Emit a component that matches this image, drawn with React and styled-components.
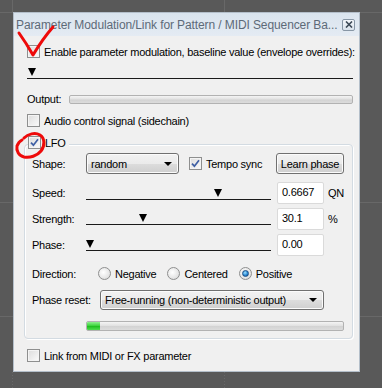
import React from 'react';
import styled, { createGlobalStyle } from 'styled-components';

const Global = createGlobalStyle`
  html, body { margin: 0; padding: 0; }
  body { background: #595959; font-family: "Liberation Sans", Arial, sans-serif; }
`;

const LINE = '#686868';

const Screen = styled.div`
  position: relative;
  width: 382px;
  height: 388px;
  overflow: hidden;
  box-sizing: border-box;
  padding: 12px 0 0 13px;
  background-color: #595959;
  background-image:
    linear-gradient(${LINE}, ${LINE}),
    linear-gradient(${LINE}, ${LINE}),
    linear-gradient(${LINE}, ${LINE}),
    linear-gradient(${LINE}, ${LINE}),
    linear-gradient(${LINE}, ${LINE}),
    repeating-linear-gradient(${LINE} 0 1px, transparent 1px 3px),
    repeating-linear-gradient(${LINE} 0 1px, transparent 1px 3px);
  background-size: 100% 1px, 100% 1px, 100% 1px, 1px 12px, 1px 12px, 1px 20px, 1px 20px;
  background-position: 0 12px, 0 202px, 0 316px, 12px 0, 224px 0, 12px 372px, 224px 372px;
  background-repeat: no-repeat;
`;

const Dialog = styled.div`
  width: 347px;
  height: 360px;
  box-sizing: border-box;
  border: 1px solid #b4bfca;
  background: #f0f0f0;
  display: flex;
  flex-direction: column;
  font-size: 11px;
  letter-spacing: -0.25px;
  color: #000;
`;

const TitleBar = styled.div`
  height: 23px;
  display: flex;
  align-items: center;
  padding: 0 4px 0 2px;
  background: linear-gradient(#dae4ee, #e4ebf3);
`;

const TitleText = styled.div`
  flex: 1;
  min-width: 0;
  font-family: "Liberation Sans", Arial, sans-serif;
  font-size: 12px;
  letter-spacing: -0.1px;
  color: #5d6a78;
  white-space: nowrap;
  overflow: hidden;
`;

const CloseBox = styled.div`
  flex: none;
  width: 13px;
  height: 12px;
  box-sizing: border-box;
  border: 1px solid #8796a5;
  border-radius: 2px;
  background: linear-gradient(#f4f7fa, #d9e2eb);
  display: flex;
  align-items: center;
  justify-content: center;
`;

const Body = styled.div`
  display: flex;
  flex-direction: column;
  padding: 0 4px 0 13px;
`;

const Row = styled.div`
  display: flex;
  align-items: center;
  margin-top: ${p => p.$mt || 0}px;
  height: ${p => (p.$h ? `${p.$h}px` : 'auto')};
  margin-left: ${p => p.$ml || 0}px;
`;

const BoxEl = styled.span`
  width: 13px;
  height: 13px;
  box-sizing: border-box;
  flex: none;
  border: 1px solid #8e8f8f;
  background: linear-gradient(135deg, #dcdcdc, #fbfbfb);
  box-shadow: inset 0 0 0 1px #f4f4f4;
  display: flex;
  align-items: center;
  justify-content: center;
`;

const CheckLabel = styled.span`
  margin-left: 4px;
  white-space: nowrap;
`;

const Checkbox = ({ checked, children }) => (
  <Row>
    <BoxEl>
      {checked && (
        <svg width="9" height="9" viewBox="0 0 9 9">
          <path d="M1 4.6 L3.4 7.2 L8 1.2" stroke="#3e5fa4" strokeWidth="1.7" fill="none" />
        </svg>
      )}
    </BoxEl>
    <CheckLabel>{children}</CheckLabel>
  </Row>
);

const SliderTrack = styled.div`
  position: relative;
  height: 10px;
  width: ${p => p.$w}px;
  margin-top: ${p => p.$mt || 0}px;
  align-self: flex-start;
  flex: none;
  border-bottom: 1px solid #1a1a1a;
  box-sizing: content-box;
`;

const Thumb = styled.div`
  position: absolute;
  top: 0;
  width: 0;
  height: 0;
  border-left: 4.5px solid transparent;
  border-right: 4.5px solid transparent;
  border-top: 8px solid #000;
`;

const Slider = ({ w, pos, mt }) => (
  <SliderTrack $w={w} $mt={mt}>
    <Thumb style={{ left: `${Math.round(pos * (w - 9))}px` }} />
  </SliderTrack>
);

const Label = styled.span`
  width: ${p => p.$w}px;
  flex: none;
  white-space: nowrap;
`;

const Meter = styled.div`
  position: relative;
  flex: none;
  width: ${p => p.$w}px;
  height: ${p => p.$h}px;
  box-sizing: border-box;
  border: 1px solid #b2b2b2;
  border-radius: 2px;
  background: linear-gradient(#f4f4f4 0%, #e2e2e2 45%, #d3d3d3 55%, #dcdcdc 100%);
  overflow: hidden;
  margin-left: ${p => p.$ml || 0}px;
`;

const MeterFill = styled.div`
  height: 100%;
  background: linear-gradient(#8ef08e 0%, #3fd43f 45%, #1fbf1f 55%, #4fdc4f 100%);
`;

const Group = styled.div`
  position: relative;
  margin: 17px 0 0 -3px;
  width: 329px;
  height: 195px;
  box-sizing: border-box;
  border: 1px solid #d3dbe2;
  border-radius: 4px;
  box-shadow: inset 1px 1px 0 #ffffff, 1px 1px 0 #ffffff;
  padding: 8px 8px 0 7px;
  display: flex;
  flex-direction: column;
`;

const GroupTitle = styled.div`
  position: absolute;
  top: -9px;
  left: 3px;
  padding-right: 3px;
  background: #f0f0f0;
`;

const Combo = styled.div`
  width: ${p => p.$w}px;
  height: ${p => p.$h}px;
  box-sizing: border-box;
  flex: none;
  border: 1px solid #707070;
  border-radius: 3px;
  background: linear-gradient(#f2f2f2 0%, #ebebeb 50%, #dddddd 51%, #cfcfcf 100%);
  box-shadow: inset 0 0 0 1px #fbfbfb;
  display: flex;
  align-items: center;
  padding: 0 6px 0 4px;
  margin-left: ${p => p.$ml || 0}px;
`;

const ComboText = styled.span`
  flex: 1;
  white-space: nowrap;
`;

const Arrow = styled.span`
  width: 0;
  height: 0;
  border-left: 4px solid transparent;
  border-right: 4px solid transparent;
  border-top: 4px solid #000;
`;

const Button = styled.div`
  margin-left: auto;
  width: 68px;
  height: 21px;
  box-sizing: border-box;
  border: 1px solid #707070;
  border-radius: 3px;
  background: linear-gradient(#f2f2f2 0%, #ebebeb 50%, #dddddd 51%, #cfcfcf 100%);
  box-shadow: inset 0 0 0 1px #fbfbfb;
  display: flex;
  align-items: center;
  justify-content: center;
  white-space: nowrap;
`;

const Field = styled.div`
  width: 47px;
  height: 22px;
  box-sizing: border-box;
  flex: none;
  margin-left: 6px;
  border: 1px solid #dadada;
  border-radius: 2px;
  background: #fff;
  padding: 3px 0 0 4px;
`;

const Unit = styled.span`
  margin-left: 4px;
`;

const Radios = styled.div`
  display: flex;
  align-items: center;
  gap: 11px;
`;

const RadioItem = styled.span`
  display: flex;
  align-items: center;
  gap: 4px;
`;

const RadioDot = styled.span`
  width: 13px;
  height: 13px;
  box-sizing: border-box;
  border-radius: 50%;
  border: 1px solid #8e8f8f;
  background: radial-gradient(circle at 40% 40%, #ffffff 0%, #e6e6e6 60%, #cfcfcf 100%);
  display: flex;
  align-items: center;
  justify-content: center;
  &::after {
    content: '';
    display: ${p => (p.$on ? 'block' : 'none')};
    width: 5px;
    height: 5px;
    border-radius: 50%;
    border: 1px solid #1c4f86;
    background: radial-gradient(circle at 40% 35%, #9fe0ff 0%, #2a8ad4 55%, #0d4a8c 100%);
  }
`;

const Overlay = styled.svg`
  position: absolute;
  left: 0;
  top: 0;
  pointer-events: none;
`;

const Radio = ({ on, children }) => (
  <RadioItem>
    <RadioDot $on={on} />
    <span>{children}</span>
  </RadioItem>
);

export default function App() {
  return (
    <>
      <Global />
      <Screen>
        <Dialog>
          <TitleBar>
            <TitleText>Parameter Modulation/Link for Pattern / MIDI Sequencer Ba...</TitleText>
            <CloseBox>
              <svg width="8" height="7" viewBox="0 0 8 7">
                <path d="M1 0.5 L7 6.5 M7 0.5 L1 6.5" stroke="#3d4a57" strokeWidth="1.6" />
              </svg>
            </CloseBox>
          </TitleBar>
          <Body>
            <Row $mt={9}>
              <Checkbox>Enable parameter modulation, baseline value (envelope overrides):</Checkbox>
            </Row>
            <Row $mt={10}>
              <Slider w={326} pos={0.003} />
            </Row>
            <Row $mt={14} $h={12}>
              <Label $w={42}>Output:</Label>
              <Meter $w={284} $h={9} />
            </Row>
            <Row $mt={9}>
              <Checkbox>Audio control signal (sidechain)</Checkbox>
            </Row>
            <Group>
              <GroupTitle>
                <Checkbox checked>LFO</Checkbox>
              </GroupTitle>
              <Row $h={21}>
                <Label $w={54}>Shape:</Label>
                <Combo $w={93} $h={21}>
                  <ComboText>random</ComboText>
                  <Arrow />
                </Combo>
                <Row $ml={10}>
                  <Checkbox checked>Tempo sync</Checkbox>
                </Row>
                <Button>Learn phase</Button>
              </Row>
              <Row $mt={8} $h={22}>
                <Label $w={54}>Speed:</Label>
                <Slider w={185} pos={0.727} mt={7} />
                <Field>0.6667</Field>
                <Unit>QN</Unit>
              </Row>
              <Row $mt={4} $h={22}>
                <Label $w={54}>Strength:</Label>
                <Slider w={185} pos={0.301} mt={6} />
                <Field>30.1</Field>
                <Unit>%</Unit>
              </Row>
              <Row $mt={4} $h={22}>
                <Label $w={54}>Phase:</Label>
                <Slider w={185} pos={0} mt={6} />
                <Field>0.00</Field>
              </Row>
              <Row $mt={11} $h={13}>
                <Label $w={66}>Direction:</Label>
                <Radios>
                  <Radio>Negative</Radio>
                  <Radio>Centered</Radio>
                  <Radio on>Positive</Radio>
                </Radios>
              </Row>
              <Row $mt={10} $h={20}>
                <Label $w={68}>Phase reset:</Label>
                <Combo $w={224} $h={20}>
                  <ComboText>Free-running (non-deterministic output)</ComboText>
                  <Arrow />
                </Combo>
              </Row>
              <Row $mt={11}>
                <Meter $w={258} $h={10} $ml={54}>
                  <MeterFill style={{ width: '13px' }} />
                </Meter>
              </Row>
            </Group>
            <Row $mt={10}>
              <Checkbox>Link from MIDI or FX parameter</Checkbox>
            </Row>
          </Body>
        </Dialog>
        <Overlay width="382" height="388" viewBox="0 0 382 388">
          <path d="M19 33 C24 40 29 48 33 55 C39 45 46 35 53 27" stroke="#ee0a0a" strokeWidth="3" fill="none" strokeLinecap="round" strokeLinejoin="round" />
          <path d="M24 138 C28 134 35 132 40 135 C45 138 45 146 41 151 C37 156 30 158 24 157 C19 156 16 151 17 146 C18 143 20 141 22 140" stroke="#ee0a0a" strokeWidth="3" fill="none" strokeLinecap="round" />
        </Overlay>
      </Screen>
    </>
  );
}
